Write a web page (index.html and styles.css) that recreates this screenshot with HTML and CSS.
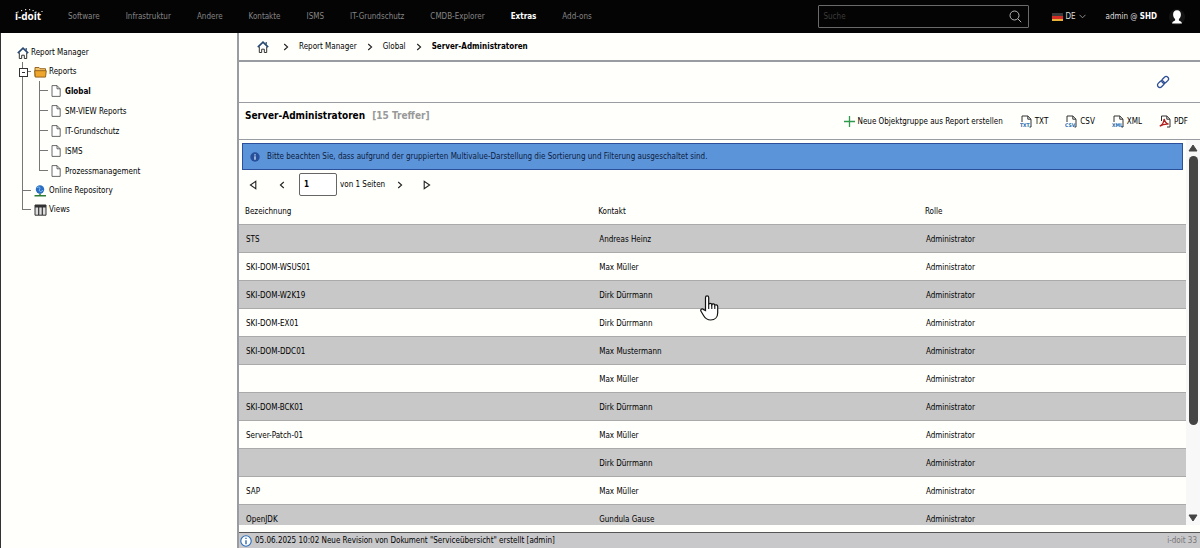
FILE: index.html
```html
<!DOCTYPE html>
<html lang="de">
<head>
  <meta charset="UTF-8">
  <title>i-doit</title>
  <meta name="viewport" content="width=device-width, initial-scale=1">
  <link rel="stylesheet" href="styles.css">
</head>
<body>
  <svg class="sprite" aria-hidden="true">
    <symbol id="home" viewBox="0 0 12 12">
      <path d="M2.3 5.5v6h2.400V8.200h2.600v3.300h2.400v-6" fill="#fff" stroke="#333" stroke-width="1"/>
      <path d="M.8 6.200L6 1.200l5.200 5" fill="none" stroke="#284872" stroke-width="1.600"/>
      <path d="M9.200 1v2.600" stroke="#284872" stroke-width="1.200"/>
    </symbol>
    <symbol id="doc" viewBox="0 0 10 12">
      <path d="M1 .6h5l3.200 3.200v7.600H1zM6 .6v3.200h3.200" fill="#fff" stroke="#444" stroke-width=".8"/>
    </symbol>
    <symbol id="next" viewBox="0 0 6 8">
      <path d="M1.200 1l3.400 3-3.400 3" fill="none" stroke="#222" stroke-width="1.100"/>
    </symbol>
    <symbol id="end" viewBox="0 0 8 10">
      <path d="M1.200 1.200v7.600L6.600 5z" fill="none" stroke="#222" stroke-width="1.100"/>
    </symbol>
    <symbol id="file" viewBox="0 0 12 13">
      <path d="M2 7V1h5.800L11 4.200V12H9.500M7.800 1v3.200H11" fill="none" stroke="#333" stroke-width="1"/>
    </symbol>
  </svg>

  <header class="topbar">
    <a class="logo" href="#">
      <svg class="logo-dots" viewBox="0 0 28 5"><path d="M2.500 4h1M6 2.600h1.200M10 1.700h1.200M14 1.700h1.200M17.500 2.600h1.200M20.500 4h1M26.500 3.500h1" stroke="#fff" stroke-width="1"/></svg>
      <span>i-doit</span>
    </a>
    <nav class="mainmenu">
      <a href="#">Software</a>
      <a href="#">Infrastruktur</a>
      <a href="#">Andere</a>
      <a href="#">Kontakte</a>
      <a href="#">ISMS</a>
      <a href="#">IT-Grundschutz</a>
      <a href="#">CMDB-Explorer</a>
      <a href="#" class="active">Extras</a>
      <a href="#">Add-ons</a>
    </nav>
    <form class="search">
      <input type="search" placeholder="Suche" aria-label="Suche">
      <button type="button" aria-label="Suche starten">
        <svg width="13" height="13" viewBox="0 0 13 13"><circle cx="5.500" cy="5.500" r="4.500" fill="none" stroke="#b5b5b5"/><path d="M8.800 8.800l3.400 3.400" stroke="#b5b5b5"/></svg>
      </button>
    </form>
    <label class="lang">
      <svg width="11" height="8" viewBox="0 0 11 8"><path fill="#3a3a3a" d="M0 0h11v3H0z"/><path fill="#d32f26" d="M0 3h11v3H0z"/><path fill="#e8b23a" d="M0 6h11v2H0z"/></svg>
      <select aria-label="Sprache"><option>DE</option></select>
      <svg width="7" height="5" viewBox="0 0 7 5"><path d="M.5.8l3 3 3-3" fill="none" stroke="#999" stroke-width=".9"/></svg>
    </label>
    <a class="user" href="#">
      <span>admin @ <b>SHD</b></span>
      <svg width="16" height="16" viewBox="0 0 16 16"><circle cx="8" cy="8" r="8" fill="#141414"/><path d="M8 1.200c-2.600 0-3.900 1.700-3.900 4.200 0 2 .9 3.700 2 4.500v1.600c-1.300.5-2.700.9-3.100 3h10c-.4-2.100-1.800-2.500-3.100-3v-1.600c1.100-.8 2-2.500 2-4.500C11.900 2.900 10.600 1.200 8 1.200z" fill="#fff"/></svg>
    </a>
  </header>

  <div class="layout">
    <aside class="sidebar">
      <a class="node" href="#"><svg width="12" height="12"><use href="#home"/></svg>Report Manager</a>
      <ul class="tree">
        <li class="open">
          <a class="node" href="#"><svg width="13" height="12" viewBox="0 0 13 12"><path d="M1 10.500V1.500h4l1 1.200h5.500v2" fill="#f5c46a" stroke="#8c5a12" stroke-width=".9"/><path d="M.7 4.700h11.600l-.8 6.400H1.300z" fill="#eea62c" stroke="#8c5a12" stroke-width=".9"/></svg>Reports</a>
          <ul>
            <li><a class="node active" href="#"><svg width="10" height="12"><use href="#doc"/></svg>Global</a></li>
            <li><a class="node" href="#"><svg width="10" height="12"><use href="#doc"/></svg>SM-VIEW Reports</a></li>
            <li><a class="node" href="#"><svg width="10" height="12"><use href="#doc"/></svg>IT-Grundschutz</a></li>
            <li><a class="node" href="#"><svg width="10" height="12"><use href="#doc"/></svg>ISMS</a></li>
            <li><a class="node" href="#"><svg width="10" height="12"><use href="#doc"/></svg>Prozessmanagement</a></li>
          </ul>
        </li>
        <li><a class="node" href="#"><svg width="13" height="12" viewBox="0 0 13 12"><circle cx="6" cy="4.500" r="4.200" fill="#2a6fc4"/><path d="M3 3c1-1.500 2.500-1 3-.3S4.500 5 5.500 6 8 6.500 8.800 5" fill="none" stroke="#8cc3f0" stroke-width="1"/><path d="M6 8.500v2.300M.5 10.800h11.500" stroke="#2f7d32" stroke-width="1.500"/></svg>Online Repository</a></li>
        <li class="last"><a class="node" href="#"><svg width="13" height="12" viewBox="0 0 13 12"><path d="M1 1h11v10.200H1z" fill="#ddd" stroke="#333"/><path d="M1 1h11v2.500H1z" fill="#333"/><path d="M4.700 3v8M8.300 3v8" stroke="#333" stroke-width="1.200"/></svg>Views</a></li>
      </ul>
    </aside>

    <main class="content">
      <nav class="breadcrumb">
        <a href="#" aria-label="Start"><svg width="12" height="12"><use href="#home"/></svg></a>
        <svg width="6" height="8"><use href="#next"/></svg>
        <a href="#">Report Manager</a>
        <svg width="6" height="8"><use href="#next"/></svg>
        <a href="#">Global</a>
        <svg width="6" height="8"><use href="#next"/></svg>
        <b>Server-Administratoren</b>
      </nav>

      <div class="linkbar">
        <a href="#" aria-label="Link">
          <svg width="14" height="14" viewBox="0 0 14 14"><g fill="none" stroke="#2d4f94" stroke-width="1.300" transform="rotate(-45 7 7)"><rect x=".2" y="4.600" width="7.600" height="4.800" rx="2.400"/><rect x="6.200" y="4.600" width="7.600" height="4.800" rx="2.400"/></g></svg>
        </a>
      </div>

      <div class="headline">
        <h1>Server-Administratoren <span>[15 Treffer]</span></h1>
        <div class="actions">
          <button type="button" class="create"><svg width="11" height="11" viewBox="0 0 11 11"><path d="M5.500 0v11M0 5.500h11" stroke="#2f9a4e" stroke-width="1.300"/></svg>Neue Objektgruppe aus Report erstellen</button>
          <button type="button"><svg width="12" height="13" viewBox="0 0 12 13"><use href="#file"/><text x="0" y="12" class="ext">TXT</text></svg>TXT</button>
          <button type="button"><svg width="12" height="13" viewBox="0 0 12 13"><use href="#file"/><text x="0" y="12" class="ext">CSV</text></svg>CSV</button>
          <button type="button"><svg width="12" height="13" viewBox="0 0 12 13"><use href="#file"/><text x="0" y="12" class="ext">XML</text></svg>XML</button>
          <button type="button"><svg width="12" height="13" viewBox="0 0 12 13"><path d="M2.500 6V1h5.300L11 4.200V12H8M7.800 1v3.200H11" fill="none" stroke="#333"/><path d="M.8 11.200c2-1 4-4 4.300-7.200.8 3 2.200 4.600 4.500 5.200-2.800-.4-6 .3-8.800 2z" fill="none" stroke="#b3201f" stroke-width="1.300"/></svg>PDF</button>
        </div>
      </div>

      <div class="scroller">
        <div class="report">
          <p class="info"><svg width="10" height="10" viewBox="0 0 10 10"><circle cx="5" cy="5" r="4.700" fill="#274f9a"/><path d="M5 4.300v3.400M5 2.200v1.200" stroke="#c9dcf7" stroke-width="1.400"/></svg>Bitte beachten Sie, dass aufgrund der gruppierten Multivalue-Darstellung die Sortierung und Filterung ausgeschaltet sind.</p>
          <div class="pager">
            <button type="button" aria-label="Erste Seite"><svg class="flip" width="8" height="10"><use href="#end"/></svg></button>
            <button type="button" aria-label="Vorige Seite"><svg class="flip" width="6" height="8"><use href="#next"/></svg></button>
            <label><input type="text" value="1" aria-label="Seite"> von 1 Seiten</label>
            <button type="button" aria-label="Nächste Seite"><svg width="6" height="8"><use href="#next"/></svg></button>
            <button type="button" aria-label="Letzte Seite"><svg width="8" height="10"><use href="#end"/></svg></button>
          </div>
          <table>
            <thead>
              <tr><th>Bezeichnung</th><th>Kontakt</th><th>Rolle</th></tr>
            </thead>
            <tbody>
              <tr><td>STS</td><td>Andreas Heinz</td><td>Administrator</td></tr>
              <tr><td>SKI-DOM-WSUS01</td><td>Max Müller</td><td>Administrator</td></tr>
              <tr><td>SKI-DOM-W2K19</td><td>Dirk Dürrmann</td><td>Administrator</td></tr>
              <tr><td>SKI-DOM-EX01</td><td>Dirk Dürrmann</td><td>Administrator</td></tr>
              <tr><td>SKI-DOM-DDC01</td><td>Max Mustermann</td><td>Administrator</td></tr>
              <tr><td></td><td>Max Müller</td><td>Administrator</td></tr>
              <tr><td>SKI-DOM-BCK01</td><td>Dirk Dürrmann</td><td>Administrator</td></tr>
              <tr><td>Server-Patch-01</td><td>Max Müller</td><td>Administrator</td></tr>
              <tr><td></td><td>Dirk Dürrmann</td><td>Administrator</td></tr>
              <tr><td>SAP</td><td>Max Müller</td><td>Administrator</td></tr>
              <tr><td>OpenJDK</td><td>Gundula Gause</td><td>Administrator</td></tr>
            </tbody>
          </table>
        </div>
        <div class="scrollbar">
          <svg width="10" height="8" viewBox="0 0 10 8"><path d="M5 1l4 6H1z" fill="#444" stroke="#444" stroke-linejoin="round"/></svg>
          <div class="track"><div class="thumb"></div></div>
          <svg width="10" height="8" viewBox="0 0 10 8"><path d="M5 7l4-6H1z" fill="#444" stroke="#444" stroke-linejoin="round"/></svg>
        </div>
      </div>

      <footer class="status">
        <svg width="12" height="12" viewBox="0 0 12 12"><circle cx="6" cy="6" r="5.200" fill="#fff" stroke="#2b6cb8" stroke-width="1.100"/><path d="M6 5.200v4M6 2.700v1.400" stroke="#2b6cb8" stroke-width="1.400"/></svg>
        <span>05.06.2025 10:02 Neue Revision von Dokument "Serviceübersicht" erstellt [admin]</span>
        <span class="version">i-doit 33</span>
      </footer>
    </main>
  </div>

  <svg class="cursor" width="20" height="26" viewBox="0 0 20 26"><path d="M5.500 15.500V2.500c0-2.200 3.200-2.200 3.200 0v7c.2-1.600 2.900-1.500 3.100.2.500-1.200 2.800-1 3 .6.700-1 2.900-.6 2.900 1.200v6.200c0 4.300-2.700 7.300-7 7.300-3.500 0-5.400-1.500-7-4.200L1 16.200c-1-1.700 1-3 2.300-1.800z" fill="#fff" stroke="#111" stroke-width="1.200"/><path d="M8.700 9v5M11.800 9.800v4.200M14.800 10.500v3.500" stroke="#111" stroke-width="1.100"/></svg>
</body>
</html>
```
FILE: styles.css
```css
* {
  box-sizing: border-box;
}
body {
  margin: 0;
  height: 100vh;
  display: flex;
  flex-direction: column;
  overflow: hidden;
  background: #fffffc;
  color: #000;
  font-family: Tahoma, 'DejaVu Sans Condensed', 'DejaVu Sans', sans-serif;
  font-size: 8px;
  line-height: 13px;
}
a {
  color: inherit;
  text-decoration: none;
}
svg {
  flex: none;
  display: block;
}
button, input, select {
  font: inherit;
  color: inherit;
  background: none;
  border: 0;
  padding: 0;
  margin: 0;
}
.sprite {
  position: absolute;
  width: 0;
  height: 0;
}

/* topbar */
.topbar {
  flex: none;
  height: 33px;
  display: flex;
  align-items: center;
  padding: 0 15px;
  background: #040404;
  color: #ddd;
}
.logo {
  width: 53px;
  padding-bottom: 3px;
  color: #fff;
  font-family: 'Open Sans', sans-serif;
  font-size: 10px;
  font-weight: bold;
  line-height: 11px;
}
.logo-dots {
  width: 28px;
  height: 5px;
  margin-bottom: -2px;
}
.mainmenu {
  display: flex;
  flex: 1;
  gap: 26px;
  color: #858585;
  white-space: nowrap;
}
.mainmenu .active {
  color: #fff;
  font-weight: bold;
}
.search {
  display: flex;
  align-items: center;
  width: 211px;
  height: 23px;
  padding: 0 6px 0 4px;
  border: 1px solid #6a6a6a;
  border-radius: 1px;
}
.search input {
  flex: 1;
  min-width: 0;
}
.search input::placeholder {
  color: #3c3c3c;
  opacity: 1;
}
.lang {
  display: flex;
  align-items: center;
  gap: 2px;
  margin-left: 23px;
}
.lang select {
  appearance: none;
  width: 12px;
}
.user {
  display: flex;
  align-items: center;
  gap: 12px;
  margin-left: 19px;
}
.user b {
  color: #fff;
}

.layout {
  flex: 1;
  min-height: 0;
  display: grid;
  grid-template-columns: 239px 1fr;
}

/* tree */
.sidebar {
  padding: 10px 0 0 16px;
  border-left: 1px solid #333;
  border-right: 2px solid #999ca0;
}
.node {
  display: flex;
  align-items: center;
  gap: 2px;
  height: 19px;
}
.node.active {
  font-weight: bold;
}
.tree, .tree ul {
  list-style: none;
  margin: 0;
  padding: 0;
}
.tree {
  padding-left: 5px;
}
.tree li {
  position: relative;
  padding-left: 12px;
}
.tree li::before, .tree li::after {
  content: '';
  position: absolute;
  left: 0;
  background: #777;
}
.tree li::before {
  top: 0;
  bottom: 0;
  width: 1px;
}
.tree li::after {
  top: 9px;
  width: 9px;
  height: 1px;
}
.tree .last::before, .tree ul li:last-child::before {
  bottom: auto;
  height: 10px;
}
.tree ul {
  padding-left: 5px;
}
.tree ul .node {
  height: 20px;
  gap: 4px;
}
.tree .open > .node::before {
  content: '';
  position: absolute;
  z-index: 1;
  left: -3px;
  top: 6px;
  width: 7px;
  height: 7px;
  border: 1px solid #333;
  background: linear-gradient(#333, #333) center / 3px 1px no-repeat #fff;
}

/* content */
.content {
  display: flex;
  flex-direction: column;
  min-width: 0;
  min-height: 0;
}
.breadcrumb {
  display: flex;
  align-items: center;
  gap: 10px;
  height: 29px;
  padding: 0 18px;
  border-bottom: 2px solid #999ca0;
}
.breadcrumb a:first-child {
  margin-right: 4px;
}
.linkbar {
  display: flex;
  align-items: center;
  justify-content: flex-end;
  height: 41px;
  padding: 0 30px;
  border-bottom: 1px solid #999ca0;
}
.headline {
  display: flex;
  justify-content: space-between;
  align-items: center;
  height: 37px;
  padding: 0 12px 0 6px;
  border-bottom: 1px solid #999ca0;
}
.headline h1 {
  margin: 0 0 11px;
  font-size: 10px;
}
.headline h1 span {
  margin-left: 4px;
  color: #999;
}
.actions {
  display: flex;
  gap: 17px;
}
.actions button {
  display: flex;
  align-items: center;
  gap: 3px;
}
.ext {
  fill: #2369ae;
  font-size: 5px;
  font-weight: bold;
}
.scroller {
  flex: 1;
  min-height: 0;
  display: flex;
  margin-bottom: 7px;
}
.report {
  flex: 1;
  overflow: hidden;
}
.info {
  display: flex;
  align-items: center;
  gap: 7px;
  height: 27px;
  margin: 3px 3px 0;
  padding: 0 7px;
  border: 1px solid #2c4f9c;
  background: #5c94d9;
  color: #0c1c3e;
}
.pager {
  display: flex;
  align-items: center;
  height: 29px;
  padding-left: 10px;
  gap: 18px;
}
.pager button {
  min-width: 8px;
}
.pager button:first-child {
  margin-right: 4px;
}
.pager label {
  display: flex;
  align-items: center;
  gap: 3px;
  margin: 0 -6px;
}
.pager input {
  width: 38px;
  height: 23px;
  padding: 0 4px;
  border: 1px solid #666;
  border-radius: 2px;
  background: #fff;
  font-weight: bold;
}
.flip {
  transform: scaleX(-1);
}
table {
  width: 100%;
  table-layout: fixed;
  border-collapse: separate;
  border-spacing: 0;
}
th {
  height: 25px;
  padding: 0 6px;
  font-weight: normal;
  text-align: left;
}
th:nth-child(1) {
  width: 37.3%;
}
th:nth-child(2) {
  width: 34.5%;
}
td {
  height: 28px;
  padding: 1px 7px 0;
  border-top: 1px solid #aaa;
}
tbody tr:nth-child(odd) {
  background: #c8c8c8;
}
.scrollbar {
  width: 14px;
  display: flex;
  flex-direction: column;
  align-items: center;
  padding-top: 4px;
  gap: 4px;
  background: #f8f8f8;
}
.scrollbar svg:last-child {
  margin-bottom: 3px;
}
.track {
  flex: 1;
}
.thumb {
  width: 9px;
  height: 76%;
  border-radius: 5px;
  background: #444;
}
.status {
  display: flex;
  align-items: center;
  gap: 3px;
  height: 16px;
  padding: 0 3px 0 1px;
  border-top: 1px solid #555;
  background: #c8c8ca;
}
.version {
  margin-left: auto;
  color: #777;
}

/* pointer over the table */
.cursor {
  position: absolute;
  left: 700px;
  top: 295px;
}
```
